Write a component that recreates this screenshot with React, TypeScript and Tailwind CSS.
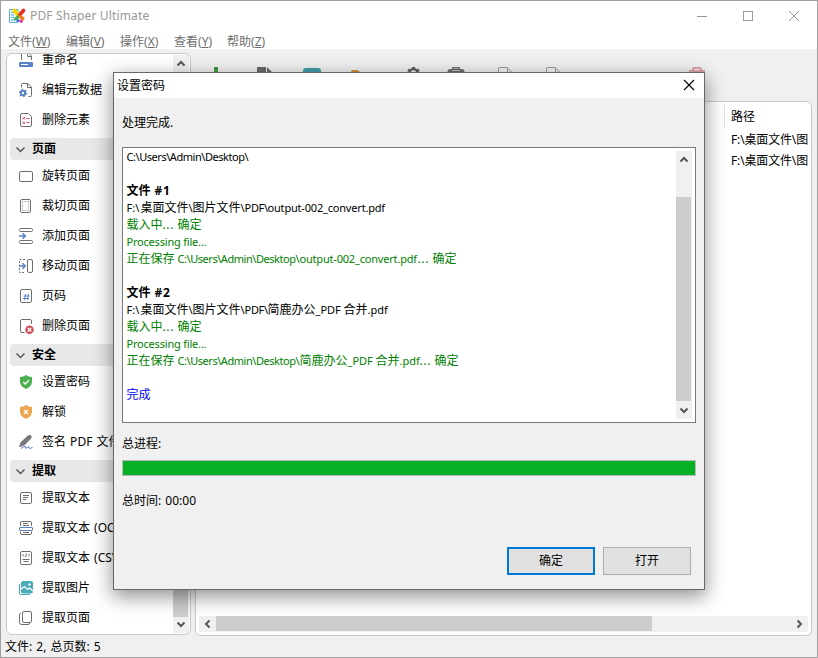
import { useState, type ReactNode } from "react";
import clsx from "clsx";

type NavItem = { label: string; icon: ReactNode; header?: false };
type NavHeader = { label: string; header: true };

type LogPart = {
  text: string;
  styles?: string;
};

type LogLine = {
  parts: LogPart[];
  styles?: string;
};

function Icon({ children }: { children: ReactNode }) {
  return (
    <svg
      width="16"
      height="16"
      viewBox="0 0 16 16"
      fill="none"
      stroke="#6e6e6e"
      strokeWidth="1"
      className="shrink-0 overflow-visible"
    >
      {children}
    </svg>
  );
}

const page = <rect x="2.5" y="1.5" width="11" height="13" rx="1.5" />;

const navItems: (NavItem | NavHeader)[] = [
  {
    label: "重命名",
    icon: (
      <Icon>
        <path d="M3.5 8V2Q3.5 .5 5 .5H10L13.5 4V8M9.5 .5V4.5H13.5" />
        <rect x="1" y="10" width="14" height="5" rx="1" fill="#5b82c4" stroke="none" />
        <path d="M3 12.500H10" stroke="#fff" />
      </Icon>
    ),
  },
  {
    label: "编辑元数据",
    icon: (
      <Icon>
        <path d="M3.500 5.500V2.500Q3.500 1.500 4.500 1.500H9.500L13.500 5V13.500Q13.500 14.500 12.500 14.500H10.500M9.500 1.500V5.500H13.500" />
        <circle cx="5" cy="11" r="2.200" stroke="#5b82c4" strokeWidth="2" />
        <circle cx="5" cy="11" r="3.500" stroke="#5b82c4" strokeWidth="1.500" strokeDasharray="1.500 2.160" />
      </Icon>
    ),
  },
  {
    label: "删除元素",
    icon: (
      <Icon>
        <path d="M4 1.500H10.500L13.500 4.500V13Q13.500 14.500 12 14.500H4Q2.500 14.500 2.500 13V3Q2.500 1.500 4 1.500Z" />
        <path d="M4.500 5L7 7.500M7 5L4.500 7.500M4.500 9.500L7 12M7 9.500L4.500 12M8.500 6.500H11.500M8.500 10.500H11.500" stroke="#d0525c" />
      </Icon>
    ),
  },
  { label: "页面", header: true },
  {
    label: "旋转页面",
    icon: (
      <Icon>
        <rect x="1.500" y="3.500" width="13" height="10" rx="1.500" />
      </Icon>
    ),
  },
  {
    label: "裁切页面",
    icon: (
      <Icon>
        <rect x="2.500" y="1.500" width="10" height="13" rx="1.500" />
        <rect x="4.500" y="3.500" width="6" height="9" stroke="#c9c9c9" />
      </Icon>
    ),
  },
  {
    label: "添加页面",
    icon: (
      <Icon>
        <rect x="1.500" y=".5" width="13" height="3" rx="1.200" />
        <rect x="1.500" y="12.500" width="13" height="3" rx="1.200" />
        <path d="M1 8H7M4.500 5.300L7.300 8L4.500 10.700" stroke="#5b82c4" strokeWidth="1.500" />
      </Icon>
    ),
  },
  {
    label: "移动页面",
    icon: (
      <Icon>
        <rect x="9.500" y="1.500" width="5" height="13" rx="1.500" />
        <path d="M7 1.500H1.500V14.500H7" strokeDasharray="2 1.500" />
        <path d="M1 8H7M4.500 5.300L7.300 8L4.500 10.700" stroke="#5b82c4" strokeWidth="1.500" />
      </Icon>
    ),
  },
  {
    label: "页码",
    icon: (
      <Icon>
        {page}
        <path d="M7.500 6L6.500 12M10.500 6L9.500 12M5.500 8H11.500M5 10.500H11" stroke="#5b82c4" />
      </Icon>
    ),
  },
  {
    label: "删除页面",
    icon: (
      <Icon>
        <path d="M6.500 14.500H4Q2.500 14.500 2.500 13V3Q2.500 1.500 4 1.500H12Q13.500 1.500 13.500 3V6" />
        <circle cx="11.500" cy="11.700" r="4.300" fill="#d0525c" stroke="none" />
        <path d="M9.700 9.900L13.300 13.500M13.300 9.900L9.700 13.500" stroke="#fff" strokeWidth="1.300" />
      </Icon>
    ),
  },
  { label: "安全", header: true },
  {
    label: "设置密码",
    icon: (
      <Icon>
        <path d="M8 1Q10.500 3 14 3V7.500Q14 12.500 8 15Q2 12.500 2 7.500V3Q5.500 3 8 1Z" fill="#4caf50" stroke="none" />
        <path d="M5.200 8L7.200 10L11 6.200" stroke="#fff" strokeWidth="1.400" />
      </Icon>
    ),
  },
  {
    label: "解锁",
    icon: (
      <Icon>
        <path d="M8 1Q10.500 3 14 3V7.500Q14 12.500 8 15Q2 12.500 2 7.500V3Q5.500 3 8 1Z" fill="#eba64f" stroke="none" />
        <path d="M6 6L10 10M10 6L6 10" stroke="#fff" strokeWidth="1.400" />
      </Icon>
    ),
  },
  {
    label: "签名 PDF 文件",
    icon: (
      <Icon>
        <path d="M1 13L2.500 8.500L9.500 1.800Q11.500 .3 13 1.300Q14.500 2.800 13 4.800L6.500 11.200L2 13Z" fill="#777" stroke="none" />
        <path d="M3 14.500Q6.500 11.500 7.500 12.500Q6.500 15 8.500 14Q10.500 12.500 11 13Q10.500 15 12.500 14.300L14.500 13.500" stroke="#5b82c4" />
      </Icon>
    ),
  },
  { label: "提取", header: true },
  {
    label: "提取文本",
    icon: (
      <Icon>
        <rect x="2.500" y="2.500" width="11" height="11" rx="1.500" />
        <path d="M5 5.500H11M5 7.500H10M5 9.500H8.500" />
      </Icon>
    ),
  },
  {
    label: "提取文本 (OCR)",
    icon: (
      <Icon>
        <path d="M2.500 6V3Q2.500 1.500 4 1.500H12Q13.500 1.500 13.500 3V6M2.500 11.500V13Q2.500 14.500 4 14.500H12Q13.500 14.500 13.500 13V11.500M5 3.500H10M5 5.500H11M5 12.500H11" />
        <rect x="1.500" y="7.500" width="13" height="3" rx=".5" fill="#fff" stroke="#5b82c4" />
      </Icon>
    ),
  },
  {
    label: "提取文本 (CSV)",
    icon: (
      <Icon>
        {page}
        <path d="M5.500 4L4.500 5.200L5.500 6.500M10.500 4L11.500 5.200L10.500 6.500M8.500 3.500L7.500 7M4.500 9.500H11.500M5.500 11.500H10.500" />
      </Icon>
    ),
  },
  {
    label: "提取图片",
    icon: (
      <Icon>
        <path d="M1.500 4V13Q1.500 14.500 3 14.500H12" stroke="#4aacb8" />
        <rect x="3" y="1" width="12" height="12.500" rx="2" fill="#4aacb8" stroke="none" />
        <path d="M3 9L6.500 6.500L9.500 9.500L11.500 8L15 11" stroke="#fff" strokeWidth="1.200" />
        <path d="M11.500 3V6M10 4.500H13" stroke="#fff" />
      </Icon>
    ),
  },
  {
    label: "提取页面",
    icon: (
      <Icon>
        <rect x="4.500" y="1.500" width="9" height="11" rx="1.500" />
        <path d="M3 3Q1.500 3 1.500 4.500V12.500Q1.500 14.500 3.500 14.500H10Q11.500 14.500 11.500 13" />
      </Icon>
    ),
  },
];

const menus = [
  { label: "文件", hotkey: "W", styles: "w-[58px]" },
  { label: "编辑", hotkey: "V", styles: "w-[54px]" },
  { label: "操作", hotkey: "X", styles: "w-[54px]" },
  { label: "查看", hotkey: "Y", styles: "w-[53px]" },
  { label: "帮助", hotkey: "Z", styles: "w-[53px]" },
];

// Latin runs are set smaller and tighter than the Chinese ones
const drive = { text: "F:\\", styles: "w-[14px] text-[11px]" };
const slash = { text: "\\", styles: "w-[4px] text-[11px]" };
const pdfFolder = { text: "PDF\\", styles: "w-[23px] text-[11px] tracking-[-0.3px]" };
const desktop = {
  text: "C:\\Users\\Admin\\Desktop\\",
  styles: "w-[122px] text-[11px] tracking-[-0.45px]",
};
const outputFile = {
  text: "output-002_convert.pdf",
  styles: "w-[118px] text-[11px] tracking-[-0.19px]",
};
const mergedFile = [
  { text: "简鹿办公" },
  { text: "_PDF", styles: "w-[28px] text-[11px]" },
  { text: "合并" },
  { text: ".pdf", styles: "w-[20px] text-[11px]" },
];
const done = [{ text: "...", styles: "w-[15px] tracking-[0.6px]" }, { text: "确定" }];
const folder = [drive, { text: "桌面文件" }, slash, { text: "图片文件" }, slash, pdfFolder];
const loading = [{ text: "载入中" }, ...done];
const processing = [{ text: "Processing file...", styles: "text-[11px] tracking-[-0.2px]" }];
const saving = [{ text: "正在保存", styles: "w-[51px]" }, desktop];

const log: LogLine[] = [
  { parts: [desktop] },
  { parts: [] },
  {
    parts: [{ text: "文件", styles: "w-[28px]" }, { text: "#1", styles: "tracking-[0.7px]" }],
    styles: "font-bold",
  },
  { parts: [...folder, outputFile] },
  { parts: loading, styles: "text-[#008000]" },
  { parts: processing, styles: "text-[#008000]" },
  { parts: [...saving, outputFile, ...done], styles: "text-[#008000]" },
  { parts: [] },
  {
    parts: [{ text: "文件", styles: "w-[28px]" }, { text: "#2", styles: "tracking-[0.7px]" }],
    styles: "font-bold",
  },
  { parts: [...folder, ...mergedFile] },
  { parts: loading, styles: "text-[#008000]" },
  { parts: processing, styles: "text-[#008000]" },
  { parts: [...saving, ...mergedFile, ...done], styles: "text-[#008000]" },
  { parts: [] },
  { parts: [{ text: "完成" }], styles: "text-[#0000ff]" },
];

const toolbarIcons: ReactNode[] = [
  <path d="M10 0H14V10H24V14H14V24H10V14H0V10H10Z" fill="#3f9a43" />,
  <path d="M5 0H14V6H20V22H5ZM15 0L20 5H15Z" fill="#686868" />,
  <rect x="3" y="1" width="18" height="18" rx="3" fill="#3f9aa8" />,
  <path d="M3 5Q3 3 5 3H9.500L12 5H18V20H3Z" fill="#cf8f3d" />,
  <g fill="none" stroke="#5f5f5f">
    <circle cx="17.500" cy="6" r="3.800" strokeWidth="2.200" />
    <path d="M17.500 -.5V2.500M12 2.700L14.500 4.300M23 2.700L20.500 4.300M12 9.300L14.500 7.700M23 9.300L20.500 7.700" strokeWidth="3" />
  </g>,
  <g fill="none">
    <rect x="3.500" y="2" width="17" height="16" rx="3" fill="#686868" />
    <path d="M9 3V.8H15V3" stroke="#686868" strokeWidth="1.500" />
    <path d="M8 3.500H16" stroke="#bbb" />
  </g>,
  <path d="M6.500 24V2Q6.500 .5 8 .5H15L20.500 6V24M15.500 .5V6H20.500" stroke="#9a9a9a" fill="none" />,
  <path d="M6.500 24V2Q6.500 .5 8 .5H15L20.500 6V24M15.500 .5V6H20.500" stroke="#9a9a9a" fill="none" />,
  null,
  null,
  <path d="M5 4H21M9 4V2Q9 1 10 1H16Q17 1 17 2V4M7 5V20H19V5" stroke="#d68b90" strokeWidth="1.600" fill="none" />,
];

function Arrow({ styles }: { styles?: string }) {
  return (
    <svg width="16" height="16" viewBox="0 0 16 16" fill="none" className={clsx("shrink-0", styles)}>
      <path d="M4.500 10.500L8 7L11.500 10.500" stroke="#555" strokeWidth="2" />
    </svg>
  );
}

function Sidebar() {
  return (
    <aside className="flex w-[185px] shrink-0 overflow-hidden rounded-[6px] border border-[#c8c8c8] bg-white py-px pr-px">
      <nav className="-mt-[10px] w-[166px] shrink-0 whitespace-nowrap pl-[3px] [word-spacing:1px]">
        {navItems.map((item) =>
          item.header ? (
            <h2
              key={item.label}
              className="mt-[3px] mb-px flex h-[22px] items-center gap-[6px] rounded-[4px] bg-[#e8e8e8] pl-[5px] text-[12px] font-bold"
            >
              <svg width="11" height="8" viewBox="0 0 11 8" fill="none" stroke="#555" strokeWidth="1.500">
                <path d="M1.500 2.500L5.500 6.500L9.500 2.500" />
              </svg>
              {item.label}
            </h2>
          ) : (
            <div key={item.label} className="flex h-[30px] items-center gap-2 pl-2">
              {item.icon}
              <span>{item.label}</span>
            </div>
          )
        )}
      </nav>
      <div className="flex w-4 shrink-0 flex-col bg-[#f0f0f0]">
        <Arrow />
        <div className="mt-[100px] mr-px flex-1 bg-[#cdcdcd]" />
        <Arrow styles="rotate-180" />
      </div>
    </aside>
  );
}

function FileList() {
  return (
    <section className="flex h-[535px] flex-col overflow-hidden rounded-[6px] border border-[#c8c8c8] bg-white px-[3px] pt-[3px] pb-[3px]">
      <div className="ml-auto w-[84px] flex-1 whitespace-nowrap">
        <div className="flex h-6 items-center border-l border-[#e0e0e0] pl-[6px]">路径</div>
        <div className="flex h-[21px] items-center pl-[7px] tracking-[-0.15px]">F:\桌面文件\图</div>
        <div className="flex h-[21px] items-center pl-[7px] tracking-[-0.15px]">F:\桌面文件\图</div>
      </div>
      <div className="flex h-4 items-center bg-[#f0f0f0]">
        <Arrow styles="-rotate-90" />
        <div className="ml-px h-[15px] w-[436px] self-start bg-[#cdcdcd]" />
        <Arrow styles="ml-auto rotate-90" />
      </div>
    </section>
  );
}

function ProcessDialog({ onClose }: { onClose: () => void }) {
  return (
    <div
      role="dialog"
      className="absolute top-[71px] left-[112px] flex h-[518px] w-[592px] flex-col border border-[#686868] bg-[#f0f0f0] shadow-[0_6px_18px_1px_rgba(0,0,0,0.42)]"
    >
      <header className="flex h-[25px] shrink-0 items-center justify-between bg-white pr-[9px] pl-[3px]">
        <span>设置密码</span>
        <button onClick={onClose} className="mb-[2px]">
          <svg width="12" height="12" viewBox="0 0 12 12" stroke="#000" strokeWidth="1.100">
            <path d="M1 1L11 11M11 1L1 11" />
          </svg>
        </button>
      </header>
      <div className="flex flex-1 flex-col px-2">
        <p className="mt-4 h-[18px] leading-[18px]">处理完成.</p>
        <div className="mt-[15px] flex h-[276px] border border-[#7a7a7a] bg-white p-[3px]">
          <div className="-mt-[3px] min-w-0 flex-1 pl-[0.5px] whitespace-nowrap">
            {log.map((line, index) => (
              <p key={index} className={clsx("h-[17px] leading-[17px]", line.styles)}>
                {line.parts.map((part, partIndex) => (
                  <span key={partIndex} className={clsx("inline-block h-[17px] leading-[17px]", part.styles)}>
                    {part.text}
                  </span>
                ))}
              </p>
            ))}
          </div>
          <div className="flex w-4 shrink-0 flex-col bg-[#f0f0f0]">
            <Arrow />
            <div className="mt-[30px] mr-px h-[204px] bg-[#cdcdcd]" />
            <Arrow styles="mt-auto rotate-180" />
          </div>
        </div>
        <p className="mt-[12px] h-[18px] leading-[18px]">总进程:</p>
        <div className="mt-[7px] h-4 border border-[#bcbcbc] bg-[#06b025]" />
        <p className="mt-4 h-[18px] leading-[18px] [word-spacing:1px]">总时间: 00:00</p>
        <div className="mt-[37px] flex justify-end gap-2 pr-[5px]">
          <button onClick={onClose} className="h-7 w-[88px] border-2 border-[#0078d7] bg-[#e1e1e1]">
            确定
          </button>
          <button className="h-7 w-[88px] border border-[#adadad] bg-[#e1e1e1]">打开</button>
        </div>
      </div>
    </div>
  );
}

export default function App() {
  const [active, setActive] = useState<boolean>(true);

  return (
    <main className="relative flex h-[658px] w-[818px] flex-col overflow-hidden border border-[#a0a0a0] bg-[#f0f0f0] font-['Noto_Sans','Noto_Sans_CJK_SC',sans-serif] text-[12px] text-black">
      <header className="flex h-[29px] shrink-0 items-center bg-white pl-2 text-[#999]">
        <svg width="17" height="16" viewBox="0 0 17 16" fill="none">
          <path d="M.5 1.500H9V14.500H.5Z" fill="#eaf5fb" stroke="#5caed0" />
          <path d="M2 4.500H5M2 7H5M2 9.500H5M2 12H6" stroke="#5caed0" />
          <path d="M9.500 7.500L5.500 2.500" stroke="#ffd800" strokeWidth="4" strokeLinecap="round" />
          <path d="M11 6.500L14.500 2.500" stroke="#e53222" strokeWidth="3.600" strokeLinecap="round" />
          <path d="M9 8.500L6.500 11" stroke="#43ac4b" strokeWidth="2.800" strokeLinecap="round" />
          <path d="M11.500 9L13.800 10.500" stroke="#f08020" strokeWidth="3.400" strokeLinecap="round" />
          <circle cx="9" cy="12.500" r="1.600" fill="#3c6fd0" />
          <circle cx="12.200" cy="13.200" r="1.600" fill="#ee2488" />
        </svg>
        <h1 className="ml-[4px] text-[12px] tracking-[0.14px]">PDF Shaper Ultimate</h1>
        <div className="ml-auto flex items-center gap-[36px] pr-[18px]">
          <svg width="10" height="10" viewBox="0 0 10 10" stroke="#999">
            <path d="M0 5.500H10" />
          </svg>
          <svg width="10" height="10" viewBox="0 0 10 10" stroke="#999" fill="none">
            <rect x=".5" y=".5" width="9" height="9" />
          </svg>
          <svg width="10" height="10" viewBox="0 0 10 10" stroke="#999">
            <path d="M0 0L10 10M10 0L0 10" />
          </svg>
        </div>
      </header>
      <nav className="flex h-[19px] shrink-0 items-start bg-white pl-[7px] leading-[23px] text-[#6d6d6d]">
        {menus.map(({ label, hotkey, styles }) => (
          <span key={label} className={clsx("whitespace-nowrap", styles)}>
            {label}(<u>{hotkey}</u>)
          </span>
        ))}
      </nav>
      <div className="flex h-[586px] pt-1 pr-[5px] pl-[5px]">
        <Sidebar />
        <div className="ml-1 min-w-0 flex-1">
          <div className="-ml-[3px] flex h-[48px] pt-[14px]">
            {toolbarIcons.map((icon, index) => (
              <div key={index} className="flex w-12 shrink-0 justify-center">
                <svg width="24" height="24" viewBox="0 0 24 24">
                  {icon}
                </svg>
              </div>
            ))}
          </div>
          <FileList />
        </div>
      </div>
      <footer className="flex h-[22px] items-center pt-px pl-1 [word-spacing:1px]">文件: 2, 总页数: 5</footer>
      {active && <ProcessDialog onClose={() => setActive(false)} />}
    </main>
  );
}
